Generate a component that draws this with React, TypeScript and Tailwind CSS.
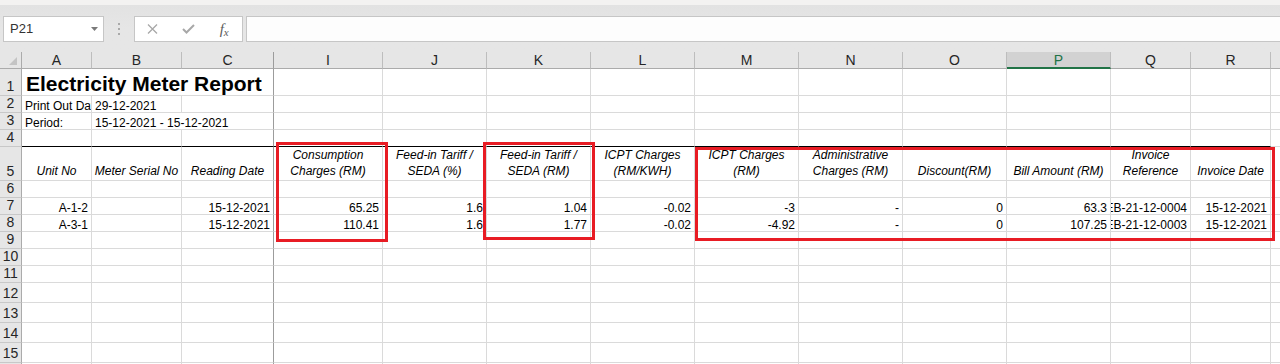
import React from "react";

const GRID =
  "grid grid-cols-[22px_70px_90px_92px_109px_104px_104px_104px_104px_104px_104px_104px_80px_80px_80px]";

const COLS = ["A", "B", "C", "I", "J", "K", "L", "M", "N", "O", "P", "Q", "R", "S"];

type Spec = {
  v?: React.ReactNode;
  a?: "l" | "r" | "c";
  spill?: boolean; // text runs into the next cell
  noRight?: boolean;
};

const HEAD5: Record<string, string[]> = {
  A: ["Unit No"],
  B: ["Meter Serial No"],
  C: ["Reading Date"],
  I: ["Consumption", "Charges (RM)"],
  J: ["Feed-in Tariff /", "SEDA (%)"],
  K: ["Feed-in Tariff /", "SEDA (RM)"],
  L: ["ICPT Charges", "(RM/KWH)"],
  M: ["ICPT Charges", "(RM)"],
  N: ["Administrative", "Charges (RM)"],
  O: ["Discount(RM)"],
  P: ["Bill Amount (RM)"],
  Q: ["Invoice", "Reference"],
  R: ["Invoice Date"],
};

const dataRow = (vals: string[]): Record<string, Spec> => {
  const out: Record<string, Spec> = {};
  const keys = ["A", "B", "C", "I", "J", "K", "L", "M", "N", "O", "P", "Q", "R"];
  keys.forEach((k, i) => {
    if (vals[i]) out[k] = { v: vals[i], a: "r" };
  });
  return out;
};

const ROWS: { n: number; h: string; cells: Record<string, Spec> }[] = [
  {
    n: 1,
    h: "h-[27px]",
    cells: {
      A: { v: "Electricity Meter Report", spill: true, noRight: true },
      B: { noRight: true },
    },
  },
  { n: 2, h: "h-[17px]", cells: { A: { v: "Print Out Date:" }, B: { v: "29-12-2021" } } },
  {
    n: 3,
    h: "h-[17px]",
    cells: { A: { v: "Period:" }, B: { v: "15-12-2021 - 15-12-2021", spill: true, noRight: true } },
  },
  { n: 4, h: "h-[17px]", cells: {} },
  { n: 5, h: "h-[34px]", cells: {} },
  { n: 6, h: "h-[17px]", cells: {} },
  {
    n: 7,
    h: "h-[17px]",
    cells: dataRow(["A-1-2", "", "15-12-2021", "65.25", "1.6", "1.04", "-0.02", "-3", "-", "0", "63.3", "EB-21-12-0004", "15-12-2021"]),
  },
  {
    n: 8,
    h: "h-[17px]",
    cells: dataRow(["A-3-1", "", "15-12-2021", "110.41", "1.6", "1.77", "-0.02", "-4.92", "-", "0", "107.25", "EB-21-12-0003", "15-12-2021"]),
  },
  { n: 9, h: "h-[17px]", cells: {} },
  { n: 10, h: "h-[17px]", cells: {} },
  { n: 11, h: "h-[17px]", cells: {} },
  { n: 12, h: "h-[20px]", cells: {} },
  { n: 13, h: "h-[20px]", cells: {} },
  { n: 14, h: "h-[20px]", cells: {} },
  { n: 15, h: "h-[20px]", cells: {} },
  { n: 16, h: "h-[20px]", cells: {} },
];

function FormulaBar() {
  return (
    <>
      <div className="h-[5px] bg-[#f3f2f1]" />
      <div className="pt-[11px] pb-[10px] bg-linear-to-b from-[#e2e2e2] via-[#e6e6e6] to-[#e6e6e6]">
        <div className="flex h-[26px]">
          <div className="ml-[3px] w-[101px] flex items-center justify-between pl-[6px] pr-[5px] border border-[#c6c6c6] bg-white">
            <span className="text-[13px] text-[#333]">P21</span>
            <svg width="7" height="4" viewBox="0 0 7 4">
              <polygon points="0,0 7,0 3.5,4" fill="#7a7a7a" />
            </svg>
          </div>
          <div className="w-[30px] flex flex-col items-center justify-center gap-[3px]">
            <span className="w-[2px] h-[2px] bg-[#a9a9a9]" />
            <span className="w-[2px] h-[2px] bg-[#a9a9a9]" />
            <span className="w-[2px] h-[2px] bg-[#a9a9a9]" />
          </div>
          <div className="w-[109px] flex border border-[#c6c6c6] bg-white">
            <div className="w-[36px] flex items-center justify-center">
              <svg width="11" height="10" viewBox="0 0 11 10">
                <path d="M1 0.5 L10 9.5 M10 0.5 L1 9.5" stroke="#a8a8a8" strokeWidth="1.3" fill="none" />
              </svg>
            </div>
            <div className="w-[36px] flex items-center justify-center">
              <svg width="13" height="10" viewBox="0 0 13 10">
                <path d="M1 5 L4.5 8.5 L12 1" stroke="#a8a8a8" strokeWidth="2" fill="none" />
              </svg>
            </div>
            <div className="w-[36px] flex items-center justify-center">
              <span className="font-['Liberation_Serif',serif] italic text-[15px] leading-none text-[#5c5c5c]">
                f<span className="text-[11px] relative top-[2px]">x</span>
              </span>
            </div>
          </div>
          <div className="ml-[3px] flex-1 border border-r-0 border-[#c6c6c6] bg-[#fdfdfd]" />
        </div>
      </div>
    </>
  );
}

function HeaderRow() {
  return (
    <div className={`${GRID} h-[17px] text-[14px] leading-none text-[#262626]`}>
      <div className="flex items-end justify-end pr-[4px] pb-[3px] bg-[#e6e6e6] border-r border-b border-[#ababab]">
        <svg width="8" height="8" viewBox="0 0 8 8">
          <polygon points="8,0 8,8 0,8" fill="#c4c4c4" />
        </svg>
      </div>
      {COLS.map((c) =>
        c === "P" ? (
          <div
            key={c}
            className="flex items-center justify-center bg-[#d2d2d2] text-[#217346] border-r border-r-[#bdbdbd] border-b-2 border-b-[#217346]"
          >
            {c}
          </div>
        ) : (
          <div
            key={c}
            className={`flex items-center justify-center bg-[#e6e6e6] border-r border-b border-b-[#ababab] ${
              c === "C" ? "border-r-[#9c9c9c]" : "border-r-[#bdbdbd]"
            }`}
          >
            {c}
          </div>
        )
      )}
    </div>
  );
}

function Sheet() {
  return (
    <div>
      <HeaderRow />
      {ROWS.map((row) => (
        <div key={row.n} className={`${GRID} ${row.h}`}>
          <div className="flex items-end justify-center pb-[2px] bg-[#e6e6e6] border-r border-r-[#ababab] border-b border-b-[#c8c8c8] text-[14px] leading-none text-[#262626]">
            {row.n}
          </div>
          {COLS.map((c) => {
            const s = row.cells[c] || {};
            const rightBorder = s.noRight
              ? "border-r-0"
              : c === "C"
              ? "border-r border-r-[#9c9c9c]"
              : "border-r border-r-[#dadada]";
            const bottom =
              row.n === 4 && c !== "S" ? "border-b border-b-black" : "border-b border-b-[#dadada]";

            if (row.n === 5 && HEAD5[c]) {
              return (
                <div
                  key={c}
                  className={`flex flex-col items-center justify-end pb-[1px] italic text-[12px] leading-[16px] whitespace-nowrap overflow-hidden ${rightBorder} ${bottom}`}
                >
                  {HEAD5[c].map((l) => (
                    <span key={l}>{l}</span>
                  ))}
                </div>
              );
            }

            if (row.n === 1 && c === "A") {
              return (
                <div key={c} className={`flex items-end pl-[4px] ${rightBorder} ${bottom}`}>
                  <span className="font-bold text-[21px] leading-[23px] whitespace-nowrap relative z-10">
                    {s.v}
                  </span>
                </div>
              );
            }

            return (
              <div
                key={c}
                className={`flex items-end px-[3px] text-[12px] leading-[12px] whitespace-nowrap ${
                  s.spill ? "overflow-visible" : "overflow-hidden"
                } ${s.a === "r" ? "justify-end" : "justify-start"} ${rightBorder} ${bottom}`}
              >
                {s.v && <span className="shrink-0 relative z-10">{s.v}</span>}
              </div>
            );
          })}
        </div>
      ))}
    </div>
  );
}

export default function App() {
  return (
    <div className="relative w-[1280px] h-[364px] overflow-hidden bg-white text-black font-['Liberation_Sans',Arial,sans-serif]">
      <FormulaBar />
      <Sheet />
      {/* highlight boxes drawn on top of the sheet */}
      <div className="absolute left-[276px] top-[142px] w-[112px] h-[100px] border-[3px] border-[#e81c24]" />
      <div className="absolute left-[483px] top-[142px] w-[112px] h-[98px] border-[3px] border-[#e81c24]" />
      <div className="absolute left-[695px] top-[147px] w-[580px] h-[94px] border-[3px] border-[#e81c24]" />
    </div>
  );
}
